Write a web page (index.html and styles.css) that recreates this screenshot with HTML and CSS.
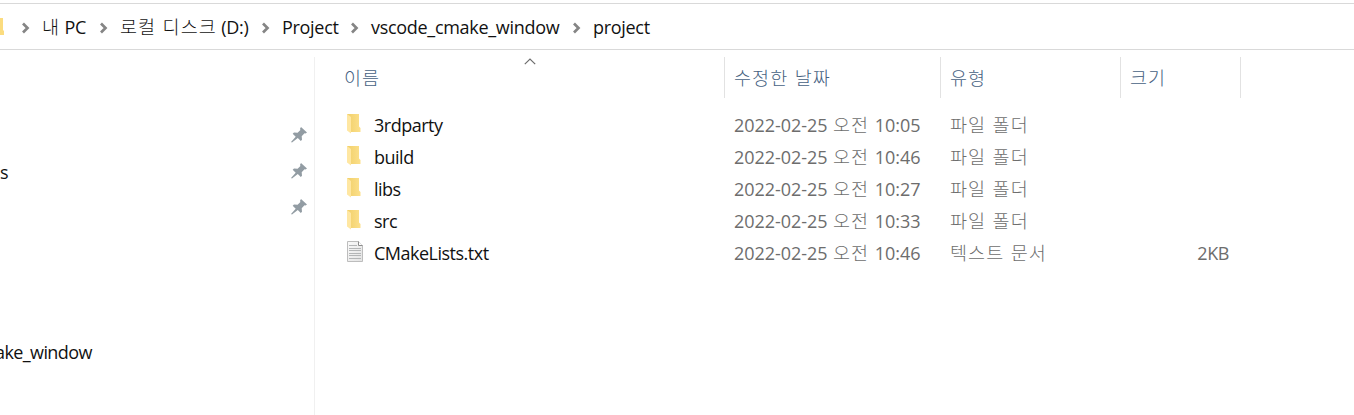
FILE: index.html
```html
<!DOCTYPE html>
<html lang="ko">
<head>
<meta charset="utf-8">
<title>project</title>
<link rel="stylesheet" href="styles.css">
</head>
<body>
<svg width="0" height="0" class="defs">
  <defs>
    <linearGradient id="gold" x1="0" x2="1"><stop offset="0" stop-color="#f1cf69"/><stop offset="1" stop-color="#fce08b"/></linearGradient>
    <linearGradient id="paper" x1="0" x2="1" y2="1"><stop offset="0" stop-color="#fafafa"/><stop offset="1" stop-color="#e3e3e3"/></linearGradient>
    <symbol id="chevron" viewBox="0 0 8 12"><path d="M1 1.500l4.500 4.500-4.500 4.500" fill="none" stroke="#858585" stroke-width="2.700"/></symbol>
    <symbol id="folder" viewBox="0 0 15 21"><path d="M1 1h12v12.500l1.500 1.500v4H4z" fill="url(#gold)"/><path d="M1 1l4 3v16.500l-4-3z" fill="#ffe7a2"/></symbol>
    <symbol id="file" viewBox="0 0 18 23"><path d="M1.500 1.500h11l4 4v16h-15z" fill="url(#paper)" stroke="#bdbdbd"/><path d="M12.500 1.500v4h4" fill="#fff" stroke="#8c8c8c"/><path d="M3 5.500h8M3 8.500h12M3 10.500h12M3 13.500h12M3 15.500h12M3 18.500h12" stroke="#b4b6b7"/></symbol>
    <symbol id="pin" viewBox="0 0 16 16"><path d="M10 0l6 5.500-1.500 1-1-.3-2.800 3 .3 3.600-1.200 1.100-3-3L1 15.600 0 15l4.700-5.200-3-3L3 5.500l3.600.2 2.800-2.800-.4-1.200z" fill="#929ca3"/></symbol>
  </defs>
</svg>
<div class="window">
  <nav class="address">
    <svg class="root-icon" viewBox="0 0 5 18"><path d="M0 0h3v12l1 1v4H0z" fill="#fbdc7f"/></svg>
    <div class="crumb"><svg><use href="#chevron"/></svg><span><span class="ko">내</span> PC</span></div>
    <div class="crumb"><svg><use href="#chevron"/></svg><span><span class="ko">로컬 디스크</span> (D:)</span></div>
    <div class="crumb"><svg><use href="#chevron"/></svg><span>Project</span></div>
    <div class="crumb"><svg><use href="#chevron"/></svg><span>vscode_cmake_window</span></div>
    <div class="crumb"><svg><use href="#chevron"/></svg><span>project</span></div>
  </nav>
  <div class="body">
    <aside class="sidebar">
      <div class="side-row"><svg class="pin"><use href="#pin"/></svg></div>
      <div class="side-row"><span class="side-text">s</span><svg class="pin"><use href="#pin"/></svg></div>
      <div class="side-row"><svg class="pin"><use href="#pin"/></svg></div>
      <div class="side-row recent"><span class="side-text side-name">ake_window</span></div>
    </aside>
    <main class="list">
      <div class="head">
        <div class="name-head"><span class="ko">이름</span><svg class="sort" viewBox="0 0 12 7"><path d="M.8 6.200L6 1l5.200 5.200" fill="none" stroke="#6d6d6d" stroke-width="1.200"/></svg></div>
        <div><span class="ko">수정한 날짜</span></div>
        <div><span class="ko">유형</span></div>
        <div><span class="ko">크기</span></div>
      </div>
      <div class="row"><div class="name"><svg class="folder"><use href="#folder"/></svg><span>3rdparty</span></div><div><span class="date">2022-02-25 <span class="ko">오전</span> 10:05</span></div><div class="type"><span class="ko">파일 폴더</span></div><div></div></div>
      <div class="row"><div class="name"><svg class="folder"><use href="#folder"/></svg><span>build</span></div><div><span class="date">2022-02-25 <span class="ko">오전</span> 10:46</span></div><div class="type"><span class="ko">파일 폴더</span></div><div></div></div>
      <div class="row"><div class="name"><svg class="folder"><use href="#folder"/></svg><span>libs</span></div><div><span class="date">2022-02-25 <span class="ko">오전</span> 10:27</span></div><div class="type"><span class="ko">파일 폴더</span></div><div></div></div>
      <div class="row"><div class="name"><svg class="folder"><use href="#folder"/></svg><span>src</span></div><div><span class="date">2022-02-25 <span class="ko">오전</span> 10:33</span></div><div class="type"><span class="ko">파일 폴더</span></div><div></div></div>
      <div class="row"><div class="name"><svg class="file"><use href="#file"/></svg><span>CMakeLists.txt</span></div><div><span class="date">2022-02-25 <span class="ko">오전</span> 10:46</span></div><div class="type"><span class="ko">텍스트 문서</span></div><div class="size"><span>2KB</span></div></div>
    </main>
  </div>
</div>
</body>
</html>
```
FILE: styles.css
```css
* { box-sizing: border-box; }
body { margin: 0; background: #fff; color: #111; font: 18px/32px "Open Sans", "Noto Sans", "Noto Sans CJK KR", sans-serif; overflow: hidden; }
.defs { display: block; }
.window { height: 415px; padding-top: 3px; white-space: nowrap; }
.ko { font-family: "Noto Sans CJK KR", sans-serif; font-weight: 300; font-size: 18.5px; line-height: 1; letter-spacing: 1.1px; }
.address { height: 47px; border-top: 1px solid #d9d9d9; border-bottom: 1px solid #d9d9d9; display: grid; grid-template-columns: 22px 78px 162px 89px 222px 1fr; align-items: center; letter-spacing: -.3px; }
.root-icon { width: 5px; height: 18px; }
.crumb { display: flex; align-items: center; gap: 12px; }
.crumb svg { width: 8px; height: 12px; flex: none; margin-top: 2px; }
.body { display: flex; height: 365px; padding-top: 7px; }
.sidebar { width: 315px; border-right: 1px solid #f0f0f0; padding-top: 60px; }
.side-row { height: 36px; display: flex; align-items: center; padding-right: 7px; letter-spacing: -.6px; }
.side-row.recent { margin-top: 108px; }
.side-text { padding-top: 2px; }
.pin { width: 16px; height: 16px; margin-left: auto; }
.side-name { margin-left: -5px; }
.list { flex: 1; padding-left: 29px; }
.head, .row { display: grid; grid-template-columns: 381px 216px 180px 120px; }
.head { height: 41px; margin-bottom: 11px; color: #46617f; }
.head > div { border-right: 1px solid #e2e2e2; display: flex; align-items: center; padding: 0 0 0 9px; }
.head > .name-head { padding-left: 0; position: relative; }
.sort { position: absolute; left: 180px; top: 1px; width: 12px; height: 7px; }
.row { height: 32px; color: #6d6d6d; }
.row > div { display: flex; align-items: center; padding-left: 9px; }
.row > .type { padding-bottom: 2px; }
.row > .name { padding-left: 2px; color: #111; letter-spacing: -.5px; }
.name svg { margin-right: 13px; }
.folder { width: 15px; height: 21px; margin-top: -3px; }
.file { width: 18px; height: 23px; margin-top: -3px; }
.name .file { margin-right: 10px; }
.date { letter-spacing: -.05px; word-spacing: .9px; }
.row > .size { justify-content: flex-end; padding-right: 12px; letter-spacing: -.4px; }
```
